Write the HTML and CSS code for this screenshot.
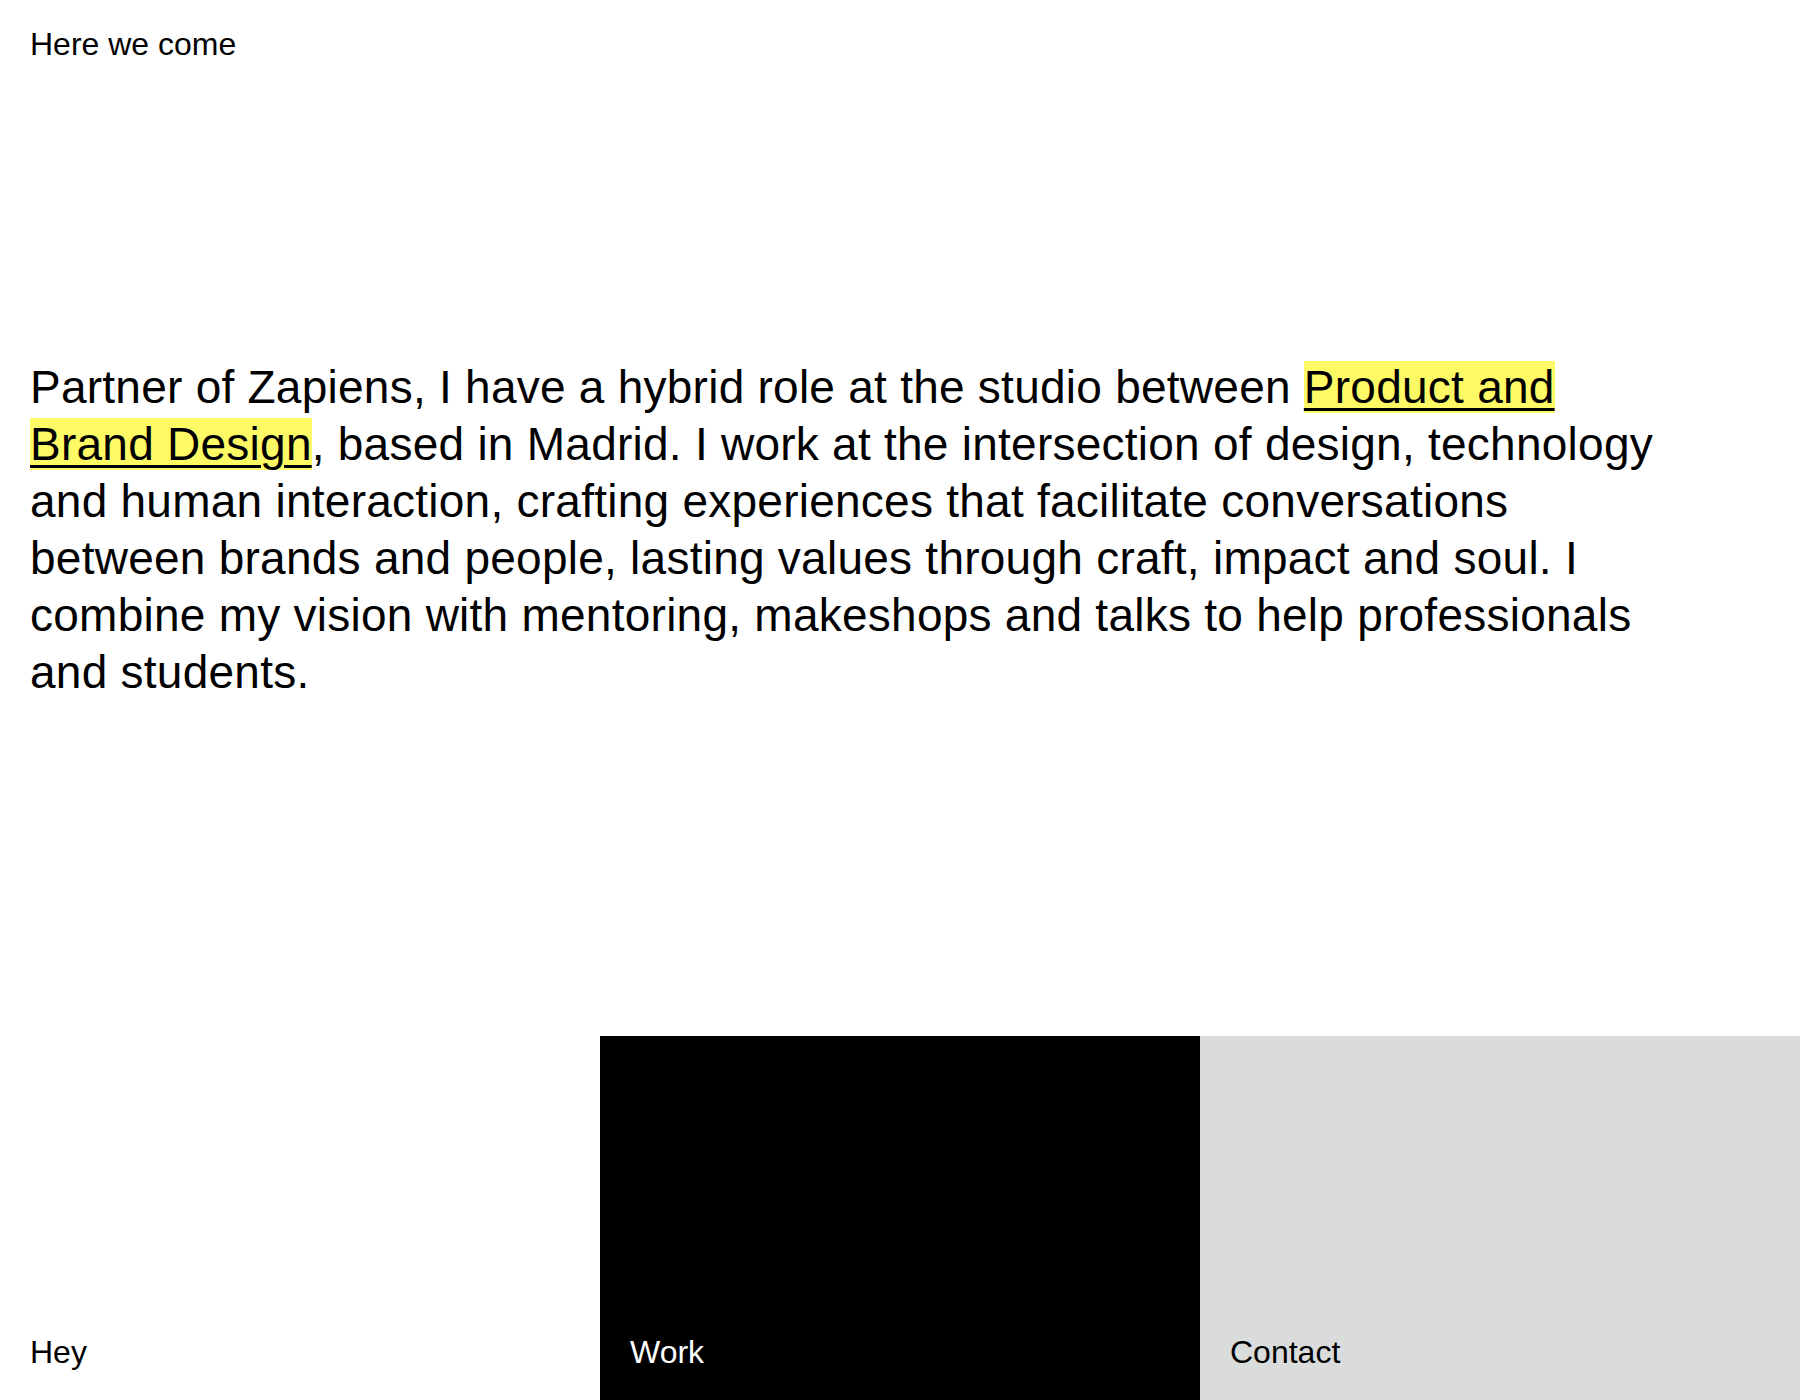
FILE: index.html
```html
<!DOCTYPE html>
<html lang="en">
<head>
<meta charset="utf-8">
<title>Here we come</title>
<link rel="stylesheet" href="styles.css">
</head>
<body>
<div class="page">
  <header class="top">
    <span class="tagline">Here we come</span>
  </header>
  <main class="intro">
    <p class="bio">Partner of Zapiens, I have a hybrid role at the studio between <a class="mark" href="#">Product and Brand Design</a>, based in Madrid. I work at the intersection of design, technology and human interaction, crafting experiences that facilitate conversations between brands and people, lasting values through craft, impact and soul. I combine my vision with mentoring, makeshops and talks to help professionals and students.</p>
  </main>
  <nav class="menu">
    <a class="tile tile-hey" href="#">Hey</a>
    <a class="tile tile-work" href="#">Work</a>
    <a class="tile tile-contact" href="#">Contact</a>
  </nav>
</div>
</body>
</html>
```

FILE: styles.css
```css
* { box-sizing: border-box; }
html, body {
  margin: 0;
  padding: 0;
  background: #ffffff;
}
body {
  font-family: "Liberation Sans", Arial, sans-serif;
  color: #000;
}
.page {
  height: 1400px;
  display: flex;
  flex-direction: column;
}
.top {
  padding: 25px 30px 0;
}
.tagline {
  font-size: 32px;
  line-height: 38px;
  display: block;
}
.intro {
  flex: 1;
  padding: 296px 30px 0;
}
.bio {
  margin: 0;
  max-width: 1645px;
  font-size: 46px;
  line-height: 57px;
  letter-spacing: 0.25px;
}
.mark {
  color: #000;
  background: #fdfa66;
  text-decoration: underline;
  text-decoration-thickness: 3px;
  text-underline-offset: 5px;
}
.menu {
  height: 364px;
  display: grid;
  grid-template-columns: repeat(3, 1fr);
}
.tile {
  display: flex;
  align-items: flex-end;
  padding: 0 30px 29px;
  font-size: 32px;
  line-height: 38px;
  text-decoration: none;
  color: #000;
}
.tile-hey { background: #ffffff; }
.tile-work { background: #000000; color: #ffffff; }
.tile-contact { background: #d9dcdb; }
```
